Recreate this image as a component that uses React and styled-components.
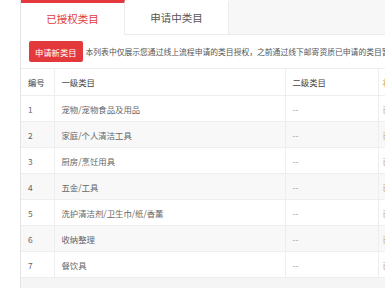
import React from "react";
import styled, { createGlobalStyle } from "styled-components";

const GlobalStyle = createGlobalStyle`
  html, body {
    margin: 0;
    padding: 0;
    background: #fff;
    overflow: hidden;
  }
  body {
    font-family: "Noto Sans CJK SC", "Liberation Sans", sans-serif;
  }
`;

const rows = [
  { id: 1, name: "宠物/宠物食品及用品" },
  { id: 2, name: "家庭/个人清洁工具" },
  { id: 3, name: "厨房/烹饪用具" },
  { id: 4, name: "五金/工具" },
  { id: 5, name: "洗护清洁剂/卫生巾/纸/香薰" },
  { id: 6, name: "收纳整理" },
  { id: 7, name: "餐饮具" },
];

const App = () => {
  return (
    <Wrap>
      <GlobalStyle />
      <Panel>
        <TabBar>
          <Tab $active>已授权类目</Tab>
          <Tab>申请中类目</Tab>
        </TabBar>
        <Content>
          <Toolbar>
            <ApplyButton>申请新类目</ApplyButton>
            <Notice>
              本列表中仅展示您通过线上流程申请的类目授权，之前通过线下邮寄资质已申请的类目暂不在此展示
            </Notice>
          </Toolbar>
          <Table>
            <colgroup>
              <col style={{ width: 33 }} />
              <col style={{ width: 231 }} />
              <col style={{ width: 93 }} />
              <col style={{ width: 80 }} />
            </colgroup>
            <thead>
              <tr>
                <Th>编号</Th>
                <Th>一级类目</Th>
                <Th>二级类目</Th>
                <Th $status>状态</Th>
              </tr>
            </thead>
            <tbody>
              {rows.map((r, i) => (
                <Row key={r.id} $striped={i % 2 === 1}>
                  <Td>{r.id}</Td>
                  <Td>{r.name}</Td>
                  <Td $muted>--</Td>
                  <Td $status>已授权</Td>
                </Row>
              ))}
            </tbody>
          </Table>
        </Content>
      </Panel>
    </Wrap>
  );
};

const Wrap = styled.div`
  width: 385px;
  height: 288px;
  padding-left: 20px;
  box-sizing: border-box;
  overflow: hidden;
`;

const Panel = styled.div`
  height: 100%;
  width: 420px;
  border-left: 1px solid #e3e3e3;
  background: #f5f5f5;
  display: flex;
  flex-direction: column;
`;

const TabBar = styled.div`
  display: flex;
  height: 35px;
  background: #f7f7f7;
  border-bottom: 1px solid #ebebeb;
  box-sizing: border-box;
`;

const Tab = styled.div`
  width: 104px;
  height: ${(p) => (p.$active ? "35px" : "34px")};
  box-sizing: border-box;
  display: flex;
  align-items: center;
  justify-content: center;
  background: #fff;
  border-right: 1px solid #ebebeb;
  border-top: 3px solid ${(p) => (p.$active ? "#e4393c" : "#fff")};
  color: ${(p) => (p.$active ? "#e4393c" : "#555")};
  font-size: 10.5px;
  padding-bottom: 2px;
`;

const Content = styled.div`
  background: #fff;
`;

const Toolbar = styled.div`
  display: flex;
  align-items: center;
  gap: 3px;
  height: 33px;
  padding: 0 8px;
  white-space: nowrap;
`;

const ApplyButton = styled.button`
  height: 21px;
  padding: 0 6px;
  border: none;
  border-radius: 2px;
  background: #e4393c;
  color: #fff;
  font-family: inherit;
  font-size: 8.3px;
  cursor: pointer;
`;

const Notice = styled.span`
  font-size: 7.8px;
  color: #555;
`;

const Table = styled.table`
  width: 437px;
  table-layout: fixed;
  border-collapse: collapse;
  font-size: 8.4px;
  color: #666;
`;

const Th = styled.th`
  height: 26px;
  padding: 0 ${(p) => (p.$status ? "4px" : "7px")};
  text-align: left;
  font-weight: normal;
  color: ${(p) => (p.$status ? "#c9a45c" : "#444")};
  border: 1px solid #eeeeee;
  border-left: none;
  white-space: nowrap;
`;

const Row = styled.tr`
  background: ${(p) => (p.$striped ? "#f8f8f8" : "#fff")};
`;

const Td = styled.td`
  height: 26px;
  box-sizing: border-box;
  padding: 0 ${(p) => (p.$status ? "4px" : "7px")};
  border: 1px solid #eeeeee;
  border-left: none;
  white-space: nowrap;
  color: ${(p) => (p.$muted ? "#999" : p.$status ? "#c9a45c" : "#666")};
`;

export default App;
